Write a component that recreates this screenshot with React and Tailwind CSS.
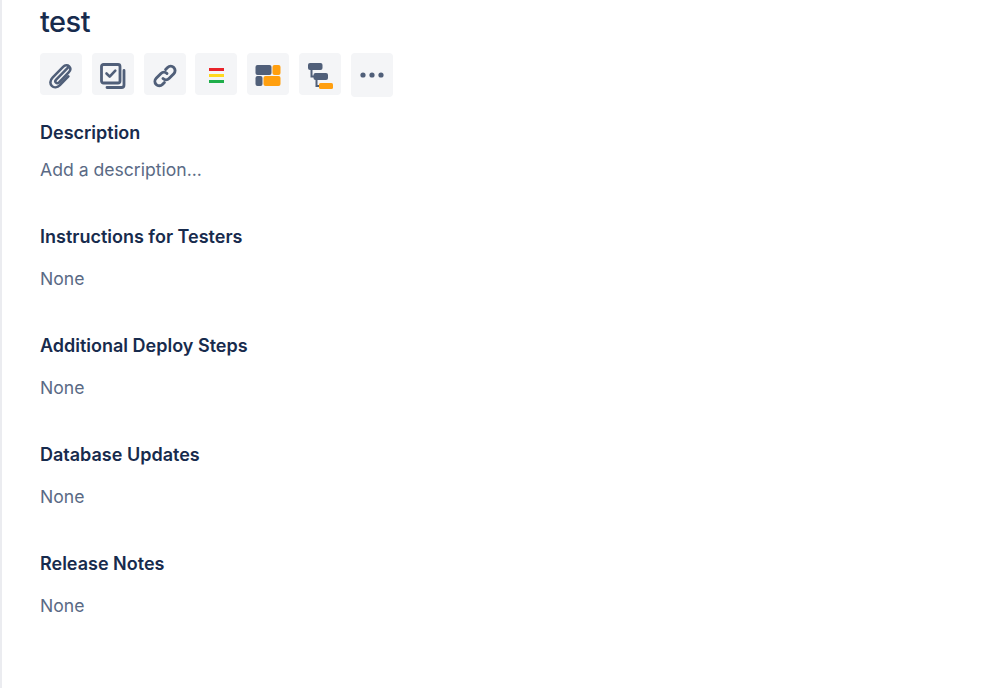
const font = { fontFamily: 'Inter, sans-serif' };

function Btn({ children, tall }) {
  return (
    <div className={`flex w-[42px] items-center justify-center rounded-[4px] bg-[#f4f5f7] ${tall ? 'h-[44px]' : 'h-[42px] pt-[3px]'}`}>
      {children}
    </div>
  );
}

function Section({ title, value }) {
  return (
    <section className="mt-[27px] first:mt-0">
      <h2 className="h-[24px] text-[18px] leading-[24px] font-semibold text-[#172b4d]">{title}</h2>
      <p className="mt-[18px] h-[24px] text-[17.6px] leading-[24px] text-[#5a6a85]">{value}</p>
      <div className="h-[16px]" />
    </section>
  );
}

export default function App() {
  return (
    <div className="min-h-[688px] w-full border-l-2 border-[#ebecf0] bg-white pl-[38px]" style={font}>
      <h1 className="h-[41px] pt-[3px] text-[29px] leading-[38px] font-[550] tracking-[-0.5px] text-[#172b4d]">test</h1>
      <div className="mt-[12px] flex items-start gap-[9.8px]">
        <Btn>
          <svg className="-ml-[2px]" width="26" height="27" viewBox="0 0 26 28" fill="none" stroke="#505f79" strokeWidth="2.6" strokeLinecap="round" strokeLinejoin="round">
            <path d="M21.5 5.5 9 18.2c-1 1-1 2.4-.2 3.2.9.9 2.2.8 3.2-.2L22 10.800c2-2.100 2.100-4.600.5-6.200-1.700-1.700-4.300-1.500-6.300.5L5.300 16.300c-2.800 2.900-2.900 6.500-.8 8.500 2.100 2.100 5.600 1.900 8.400-.9l8.800-9" />
          </svg>
        </Btn>
        <Btn>
          <svg width="26" height="26" viewBox="0 0 26 26" fill="none" stroke="#505f79" strokeLinecap="round" strokeLinejoin="round">
            <rect x="1.500" y="1.500" width="18.500" height="18.500" rx="2" strokeWidth="2.800" />
            <path d="m6.500 10.500 3.200 3.200 5.600-6" strokeWidth="2.600" />
            <path d="M24 7.500v14.500a2.500 2.500 0 0 1-2.500 2.500H7" strokeWidth="2.800" />
          </svg>
        </Btn>
        <Btn>
          <svg width="26" height="26" viewBox="0 0 26 26" fill="none" stroke="#505f79" strokeWidth="2.900" strokeLinecap="round" strokeLinejoin="round">
            <path d="M11 15.500c1.800 1.800 4.300 1.700 6 0l4.800-4.800c1.700-1.700 1.700-4.500 0-6.200s-4.500-1.700-6.200 0l-2 2" />
            <path d="M15 10.500c-1.800-1.800-4.300-1.700-6 0l-4.800 4.800c-1.700 1.700-1.700 4.500 0 6.200s4.500 1.700 6.200 0l2-2" />
          </svg>
        </Btn>
        <Btn>
          <div className="flex w-[15px] flex-col gap-[3px]">
            <div className="h-[3px] bg-[#e9232a]" />
            <div className="h-[3px] bg-[#ffd91f]" />
            <div className="h-[3px] bg-[#1fae4a]" />
          </div>
        </Btn>
        <Btn>
          <svg width="26" height="21" viewBox="0 0 26 21" fill="none">
            <rect x="0.500" y="0" width="16" height="10" rx="2" fill="#505f79" />
            <rect x="17.500" y="0" width="8" height="10" rx="2" fill="#ff9f0f" />
            <rect x="0.500" y="11" width="7" height="10" rx="2" fill="#505f79" />
            <rect x="8.500" y="11" width="17" height="10" rx="2" fill="#ff9f0f" />
          </svg>
        </Btn>
        <Btn>
          <svg width="26" height="26" viewBox="0 0 26 26" fill="none">
            <path d="M4.500 6v7.500h4M9.500 16v7h4" stroke="#505f79" strokeWidth="2" />
            <rect x="1" y="0" width="14.500" height="7" rx="2" fill="#505f79" />
            <rect x="6.500" y="10" width="14.500" height="7" rx="2" fill="#505f79" />
            <rect x="12" y="20" width="14" height="6" rx="1.500" fill="#ff9f0f" />
          </svg>
        </Btn>
        <Btn tall>
          <svg width="24" height="6" viewBox="0 0 24 6" fill="#505f79">
            <circle cx="3" cy="3" r="2.600" />
            <circle cx="12" cy="3" r="2.600" />
            <circle cx="21" cy="3" r="2.600" />
          </svg>
        </Btn>
      </div>
      <div className="mt-[24px]">
        <h2 className="h-[24px] text-[18px] leading-[24px] font-semibold text-[#172b4d]">Description</h2>
        <p className="mt-[13px] h-[24px] text-[17.6px] leading-[24px] text-[#5a6a85]">Add a description...</p>
      </div>
      <div className="mt-[43px]">
        <Section title="Instructions for Testers" value="None" />
        <Section title="Additional Deploy Steps" value="None" />
        <Section title="Database Updates" value="None" />
        <Section title="Release Notes" value="None" />
      </div>
    </div>
  );
}
